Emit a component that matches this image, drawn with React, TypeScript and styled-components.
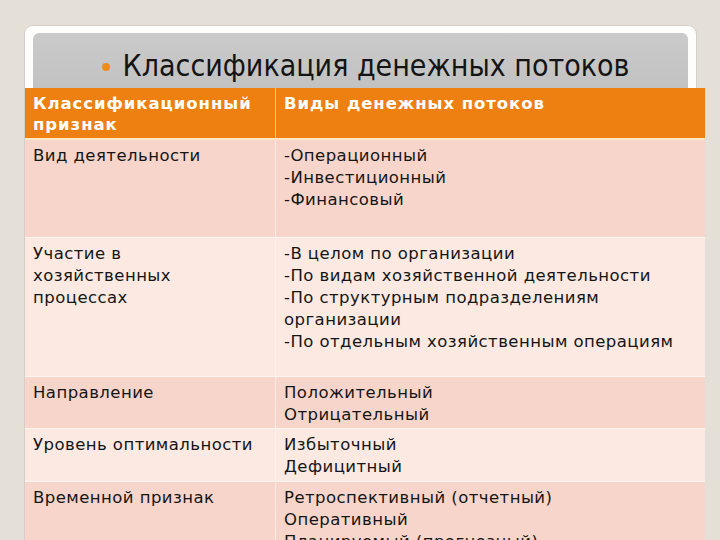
// Слайд: таблица классификации денежных потоков

import { Fragment } from "react";
import styled, { createGlobalStyle } from "styled-components";

type Row = {
  sign: string[];
  kinds: string[];
  height: number;
  shade: "dark" | "light";
};

const rows: Row[] = [
  {
    sign: ["Вид деятельности"],
    kinds: ["-Операционный", "-Инвестиционный", "-Финансовый"],
    height: 98,
    shade: "dark",
  },
  {
    sign: ["Участие в", "хозяйственных", "процессах"],
    kinds: [
      "-В целом по организации",
      "-По видам хозяйственной деятельности",
      "-По структурным подразделениям",
      "организации",
      "-По отдельным хозяйственным операциям",
    ],
    height: 139,
    shade: "light",
  },
  {
    sign: ["Направление"],
    kinds: ["Положительный", "Отрицательный"],
    height: 52,
    shade: "dark",
  },
  {
    sign: ["Уровень оптимальности"],
    kinds: ["Избыточный", "Дефицитный"],
    height: 53,
    shade: "light",
  },
  {
    sign: ["Временной признак"],
    kinds: [
      "Ретроспективный (отчетный)",
      "Оперативный",
      "Планируемый (прогнозный)",
    ],
    height: 80,
    shade: "dark",
  },
];

const App = () => {
  return (
    <>
      <GlobalStyle />
      <Page>
        <Frame>
          <TitlePanel>
            <Bullet />
            <Title>Классификация денежных потоков</Title>
          </TitlePanel>
          <Table>
            <HeadCell>
              <Line>Классификационный</Line>
              <Line>признак</Line>
            </HeadCell>
            <HeadCell>Виды денежных потоков</HeadCell>
            {rows.map((row) => (
              <Fragment key={row.sign.join(" ")}>
                <Cell $h={row.height} $shade={row.shade}>
                  {row.sign.map((s) => (
                    <Line key={s}>{s}</Line>
                  ))}
                </Cell>
                <Cell $h={row.height} $shade={row.shade}>
                  {row.kinds.map((k) => (
                    <Line key={k}>{k}</Line>
                  ))}
                </Cell>
              </Fragment>
            ))}
          </Table>
        </Frame>
      </Page>
    </>
  );
};

const GlobalStyle = createGlobalStyle`
  html, body {
    margin: 0;
    padding: 0;
    background: #e4dfd7;
  }
`;
const Page = styled.div`
  width: 720px;
  height: 540px;
  overflow: hidden;
  padding: 25px 0 0 24px;
  box-sizing: border-box;
`;
const Frame = styled.div`
  width: 673px;
  height: 600px;
  box-sizing: border-box;
  padding: 7px 8px 0;
  background: #fdfdfc;
  border: 1px solid #d3cfc8;
  border-bottom: none;
  border-radius: 9px 9px 0 0;
`;
const TitlePanel = styled.div`
  height: 55px;
  display: flex;
  align-items: center;
  justify-content: center;
  gap: 13px;
  padding: 10px 0 0 10px;
  box-sizing: border-box;
  background: linear-gradient(#cacaca, #c2c2c2);
  border-radius: 6px 6px 0 0;
`;
const Bullet = styled.span`
  width: 8px;
  height: 8px;
  border-radius: 50%;
  background: #ee8a1e;
  margin-top: 2px;
`;
const Title = styled.h1`
  margin: 0;
  font-family: "DejaVu Sans Condensed", "DejaVu Sans", sans-serif;
  font-weight: normal;
  font-size: 30px;
  color: #141414;
`;
const Table = styled.div`
  display: grid;
  grid-template-columns: 250px 430px;
  width: 680px;
  margin-left: -8px;
  font-family: "DejaVu Sans", sans-serif;
  font-size: 16.5px;
  letter-spacing: 0.45px;
  line-height: 22px;
  color: #151515;
`;
const HeadCell = styled.div`
  height: 52px;
  box-sizing: border-box;
  padding: 5px 8px 0;
  background: #ee7f11;
  border-bottom: 2px solid #fde8c4;
  color: #fff;
  font-weight: bold;
  letter-spacing: 0.95px;
  line-height: 21px;
  & + & {
    border-left: 1px solid #f9c98f;
  }
`;
const Cell = styled.div<{ $h: number; $shade: "dark" | "light" }>`
  height: ${(p) => p.$h}px;
  box-sizing: border-box;
  padding: 5px 8px 0;
  background: ${(p) => (p.$shade === "dark" ? "#f7d5ca" : "#fbe9e2")};
  border-bottom: 1px solid #fff4f0;
  &:nth-child(even) {
    border-left: 1px solid #fff1ea;
  }
`;
const Line = styled.div`
  white-space: nowrap;
`;

export default App;
